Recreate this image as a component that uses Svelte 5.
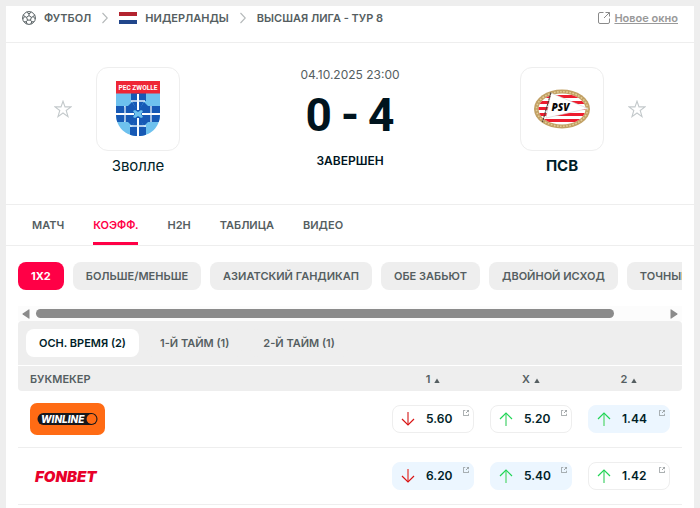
<script>
  const tabs = ['МАТЧ', 'КОЭФФ.', 'H2H', 'ТАБЛИЦА', 'ВИДЕО'];
  const markets = ['1X2', 'БОЛЬШЕ/МЕНЬШЕ', 'АЗИАТСКИЙ ГАНДИКАП', 'ОБЕ ЗАБЬЮТ', 'ДВОЙНОЙ ИСХОД', 'ТОЧНЫЙ СЧЕТ'];
  const periods = ['ОСН. ВРЕМЯ (2)', '1-Й ТАЙМ (1)', '2-Й ТАЙМ (1)'];
  const outcomes = ['1', 'X', '2'];
  const bookmakers = [
    { name: 'winline', odds: [['down', '5.60', false], ['up', '5.20', false], ['up', '1.44', true]] },
    { name: 'fonbet', odds: [['down', '6.20', true], ['up', '5.40', true], ['up', '1.42', false]] }
  ];
  let tab = $state(1);
  let market = $state(0);
  let period = $state(0);
</script>

{#snippet star(label)}
  <button class="star" aria-label={label}>
    <svg width="18" height="18" viewBox="0 0 18 18" fill="none" stroke="#c3c9cb" stroke-width="1.1">
      <path d="M9 1.2 L11 6.9 H17 L12.2 10.5 L14 16.6 L9 13 L4 16.6 L5.8 10.5 L1 6.9 H7 Z" />
    </svg>
  </button>
{/snippet}

{#snippet chevron()}
  <svg class="chevron" width="6" height="12" viewBox="0 0 6 12" fill="none" stroke="#b4b8b9" stroke-width="1.1"><path d="M.5 1 L5.3 6 L.5 11" /></svg>
{/snippet}

<div class="page">
  <header>
    <nav class="crumbs" aria-label="Раздел">
      <svg class="ball" width="14" height="14" viewBox="0 0 14 14" fill="none" stroke="#555e61" stroke-width="1">
        <circle cx="7" cy="7" r="6.4" />
        <path d="M7 4.6 L9.4 6.3 L8.5 9.1 H5.5 L4.6 6.3 Z M7 4.6 V2.8 M9.4 6.3 L11.3 5.6 M8.5 9.1 L9.7 10.8 M5.5 9.1 L4.3 10.8 M4.6 6.3 L2.7 5.6 M4.7 1.2 L7 2.8 L9.3 1.2 M12.6 3.8 L11.3 5.6 L13.2 7.9 M11.9 10.8 L9.7 10.8 L8.9 13 M5.1 13 L4.3 10.8 L2.1 10.8 M.8 7.9 L2.7 5.6 L1.4 3.8" />
      </svg>
      <a href="#football">ФУТБОЛ</a>
      {@render chevron()}
      <svg width="18" height="12" viewBox="0 0 18 12">
        <rect width="18" height="4" fill="#b3242f" /><rect y="4" width="18" height="4" fill="#fff" /><rect y="8" width="18" height="4" fill="#21468b" />
      </svg>
      <a href="#netherlands">НИДЕРЛАНДЫ</a>
      {@render chevron()}
      <a href="#league">ВЫСШАЯ ЛИГА - ТУР 8</a>
    </nav>
    <a class="window" href="#window">
      <svg width="12" height="12" viewBox="0 0 12 12" fill="none" stroke="#8a8a8a"><path d="M5.5 .5 H2 Q.5 .5 .5 2 V10 Q.5 11.5 2 11.5 H10 Q11.5 11.5 11.5 10 V6.5 M7.5 .5 H11.5 V4.5 M11.5 .5 L6 6" /></svg>
      <span>Новое окно</span>
    </a>
  </header>

  <section class="match">
    {@render star('Добавить Зволле')}
    <div class="team">
      <div class="crest">
        <svg width="44" height="56" viewBox="0 0 44 56">
          <clipPath id="shield"><path d="M0 0 H44 V33 C44 47 34 55 22 55 C10 55 0 47 0 33 Z" /></clipPath>
          <g clip-path="url(#shield)">
            <rect width="44" height="56" fill="#6ec1ee" />
            <g fill="#1759b5">
              <path d="M15 12 H30 V20 H28 L24 28 L22 31 L20 28 L16 20 H15 Z" />
              <path d="M14 56 H30 V46 H28 L24 37 L22 34 L20 37 L16 46 H14 Z" />
              <path d="M0 25 H8 V26 L17 31 L20 33 L17 35 L8 40 V41 H0 Z" />
              <path d="M44 25 H35 V26 L27 31 L24 33 L27 35 L35 40 V41 H44 Z" />
              <path d="M9 25 H12 L16 21 L22 30 L28 21 L32 25 H35 V28 L25 33 L35 38 V41 H32 L28 45 L22 36 L16 45 L12 41 H9 V38 L19 33 L9 28 Z" />
            </g>
            <path d="M22 13 V29 M22 37 V56 M0 33 H18 M26 33 H44" stroke="#fff" stroke-width="2" />
            <path d="M15 20 H29 M14 45 H30 M9 25 V41 M35 25 V41" stroke="#e5f2fb" stroke-width="1.3" />
            <path d="M22 31 L25 29 L27 30 L25 33 L27 36 L25 37 L22 35 L19 37 L17 36 L19 33 L17 30 L19 29 Z" fill="#6ec1ee" />
            <rect width="44" height="12.5" fill="#ee2635" />
          </g>
          <text x="22" y="8.8" text-anchor="middle" font-size="6.6" font-family="Roboto, sans-serif" font-weight="700" fill="#fff">PEC ZWOLLE</text>
        </svg>
      </div>
      <a class="name" href="#zwolle">Зволле</a>
    </div>
    <div class="result">
      <time>04.10.2025 23:00</time>
      <div class="score"><span>0</span><span>-</span><span>4</span></div>
      <div class="status">ЗАВЕРШЕН</div>
    </div>
    <div class="team">
      <div class="crest">
        <svg width="56" height="40" viewBox="0 0 56 40">
          <clipPath id="oval"><ellipse cx="28" cy="20" rx="23.5" ry="15.5" /></clipPath>
          <ellipse cx="28" cy="20" rx="28" ry="19.5" fill="#c1a064" />
          <ellipse cx="28" cy="20" rx="25.5" ry="17.3" fill="none" stroke="#e3cc96" stroke-width="1.6" stroke-dasharray="1.6 1.5" />
          <g clip-path="url(#oval)">
            <rect width="56" height="40" fill="#fff" />
            <path d="M0 7.5 H56 M0 13.5 H56 M0 19.5 H56 M0 25.5 H56 M0 31.5 H56" stroke="#ed1c2e" stroke-width="3" />
          </g>
          <path d="M17 4 L54 19.5 L12 29 Z" fill="#fff" stroke="#d2d2d2" stroke-width=".6" />
          <path d="M17 3.5 L8.5 33" stroke="#4a3d36" stroke-width="1.1" stroke-dasharray="2.4 .5" />
          <text x="17.5" y="22" font-size="10" font-family="Open Sans" font-weight="800" font-style="italic" fill="#080808">PSV</text>
        </svg>
      </div>
      <a class="name winner" href="#psv">ПСВ</a>
    </div>
    {@render star('Добавить ПСВ')}
  </section>

  <nav class="tabs" aria-label="Матч">
    {#each tabs as label, i}
      <button class:active={tab === i} onclick={() => (tab = i)}>{label}</button>
    {/each}
  </nav>

  <main>
    <div class="markets">
      {#each markets as label, i}
        <button class:active={market === i} onclick={() => (market = i)}>{label}</button>
      {/each}
    </div>
    <div class="scrollbar">
      <svg width="8" height="10" viewBox="0 0 8 10" fill="#8b8b8b"><path d="M7.5 .8 V9.2 Q7.5 10 6.7 9.5 L.7 5.6 Q0 5 .7 4.4 L6.7 .5 Q7.5 0 7.5 .8Z" /></svg>
      <div class="track"><div class="thumb"></div></div>
      <svg width="8" height="10" viewBox="0 0 8 10" fill="#8b8b8b"><path d="M.5 .8 V9.2 Q.5 10 1.3 9.5 L7.3 5.6 Q8 5 7.3 4.4 L1.3 .5 Q.5 0 .5 .8Z" /></svg>
    </div>
    <div class="periods">
      {#each periods as label, i}
        <button class:active={period === i} onclick={() => (period = i)}>{label}</button>
      {/each}
    </div>
    <table>
      <thead>
        <tr>
          <th class="maker">БУКМЕКЕР</th>
          {#each outcomes as label}
            <th class="outcome">{label}<svg width="6" height="5" viewBox="0 0 6 5"><path d="M3 .5 L5.7 5 H.3 Z" fill="#555e61" /></svg></th>
          {/each}
        </tr>
      </thead>
      <tbody>
        {#each bookmakers as book}
          <tr>
            <td class="maker">
              <a href="#{book.name}" aria-label={book.name}>
                {#if book.name === 'winline'}
                  <svg width="75" height="32" viewBox="0 0 75 32">
                    <rect width="75" height="32" rx="7" fill="#ff6b14" />
                    <rect x="7.5" y="10" width="60" height="12" rx="6" fill="#17171b" />
                    <circle cx="61.5" cy="16" r="4.9" fill="#ff6b14" />
                    <text x="11" y="19.5" font-family="Inter" font-size="10" font-weight="800" font-style="italic" fill="#fff">WINLINE</text>
                  </svg>
                {:else}
                  <svg width="75" height="32" viewBox="0 0 75 32">
                    <text x="5" y="21.5" font-family="Inter" font-size="15" font-weight="900" font-style="italic" fill="#e8002a">FONBET</text>
                  </svg>
                {/if}
              </a>
            </td>
            {#each book.odds as [direction, value, best]}
              <td class="outcome">
                <button class="odd" class:best>
                  <svg width="14" height="14" viewBox="0 0 14 14" fill="none">
                    {#if direction === 'up'}
                      <path d="M7 1 V14" stroke="#8fe3a6" stroke-width="2" /><path d="M1 7 L7 1 L13 7" stroke="#1fd655" stroke-width="1.2" />
                    {:else}
                      <path d="M7 0 V13" stroke="#e77f7f" stroke-width="2" /><path d="M1 7 L7 13 L13 7" stroke="#d91414" stroke-width="1.2" />
                    {/if}
                  </svg>
                  <span>{value}</span>
                  <svg class="out" width="6" height="6" viewBox="0 0 6 6" fill="none" stroke="#8b9294" stroke-width=".8"><path d="M2.3 .4 H.4 V5.6 H5.6 V3.7 M3.8 .4 H5.6 V2.2 M5.6 .4 L3 3" /></svg>
                </button>
              </td>
            {/each}
          </tr>
        {/each}
      </tbody>
    </table>
  </main>
</div>

<style>
  :global(body) { background: #eee; }
  .page {
    margin: 6px 6px 0;
    background: #fff;
    color: #555e61;
    font: 600 11px/16px Inter, "Liberation Sans", sans-serif;
    min-height: calc(100vh - 6px);
  }
  button { font: inherit; color: inherit; border: 0; padding: 0; background: none; cursor: pointer; white-space: nowrap; }
  a { color: inherit; text-decoration: none; }
  svg { display: block; flex: none; }
  header {
    display: flex;
    justify-content: space-between;
    align-items: flex-start;
    padding: 4px 16px 16px;
    border-bottom: 1px solid #eee;
  }
  .crumbs { display: flex; align-items: center; gap: 8px; }
  .crumbs .chevron { margin: 0 3px; }
  .window { display: flex; align-items: center; gap: 4px; color: #999; text-decoration: underline; }
  .match { display: flex; align-items: flex-start; padding: 24px 48px 29px; border-bottom: 1px solid #eee; }
  .star { margin-top: 33px; }
  .team { width: 84px; margin: 0 24px; text-align: center; }
  .crest {
    display: flex; align-items: center; justify-content: center;
    height: 84px; box-sizing: border-box; border: 1px solid #eee; border-radius: 12px;
  }
  .name { display: block; margin-top: 6px; color: #001e28; font-size: 15px; line-height: 18px; font-weight: 400; }
  .winner { font-weight: 700; }
  .result { flex: 1; text-align: center; color: #00141e; }
  time { display: block; font-size: 12px; font-weight: 400; color: #555e61; }
  .score { display: flex; justify-content: center; gap: 9px; margin: 8px 0 14px; font: 700 46px/48px Roboto, sans-serif; }
  .status { font-size: 12px; }
  .tabs { display: flex; gap: 29px; padding: 0 26px; border-bottom: 1px solid #eee; }
  .tabs button { height: 40px; box-sizing: border-box; border-top: 3px solid transparent; border-bottom: 3px solid transparent; }
  .tabs .active { color: #ff0046; border-bottom-color: #ff0046; }
  main { padding: 16px 12px 0; }
  .markets { display: flex; gap: 9px; overflow: hidden; }
  .markets button, .periods button { height: 28px; padding: 0 13px; border-radius: 8px; background: #eee; flex: none; }
  .markets .active { background: #ff0046; color: #fff; font-weight: 700; }
  .scrollbar { display: flex; align-items: center; gap: 6px; height: 15px; margin-top: 16px; padding: 0 4px; background: #fcfcfc; }
  .track { flex: 1; }
  .thumb { width: 92%; height: 9px; border-radius: 5px; background: #8b8b8b; }
  .periods { display: flex; gap: 8px; padding: 8px; background: #eee; border-radius: 4px 4px 0 0; margin-bottom: 1px; }
  .periods .active { background: #fff; color: #001e28; }
  table { width: 100%; border-collapse: separate; border-spacing: 0; table-layout: fixed; }
  th { height: 25px; padding: 0 8px; background: #eee; font-weight: 600; }
  th.maker { text-align: left; border-bottom-left-radius: 4px; }
  th svg { display: inline-block; margin-left: 4px; }
  th:last-child { border-bottom-right-radius: 4px; }
  td { height: 56px; padding: 0 8px; border-bottom: 1px solid #eee; }
  th.maker, td.maker { padding-left: 12px; }
  .outcome { width: 82px; }
  th.outcome:last-child, td.outcome:last-child { padding-right: 12px; }
  .odd {
    position: relative; display: flex; align-items: center; gap: 11px;
    width: 100%; height: 28px; padding: 0 8px; box-sizing: border-box;
    border: 1px solid #eee; border-radius: 8px; color: #001e28; font-size: 12px;
  }
  .best { background: #ecf6ff; border-color: #ecf6ff; }
  .out { position: absolute; top: 4px; right: 4px; }
</style>
